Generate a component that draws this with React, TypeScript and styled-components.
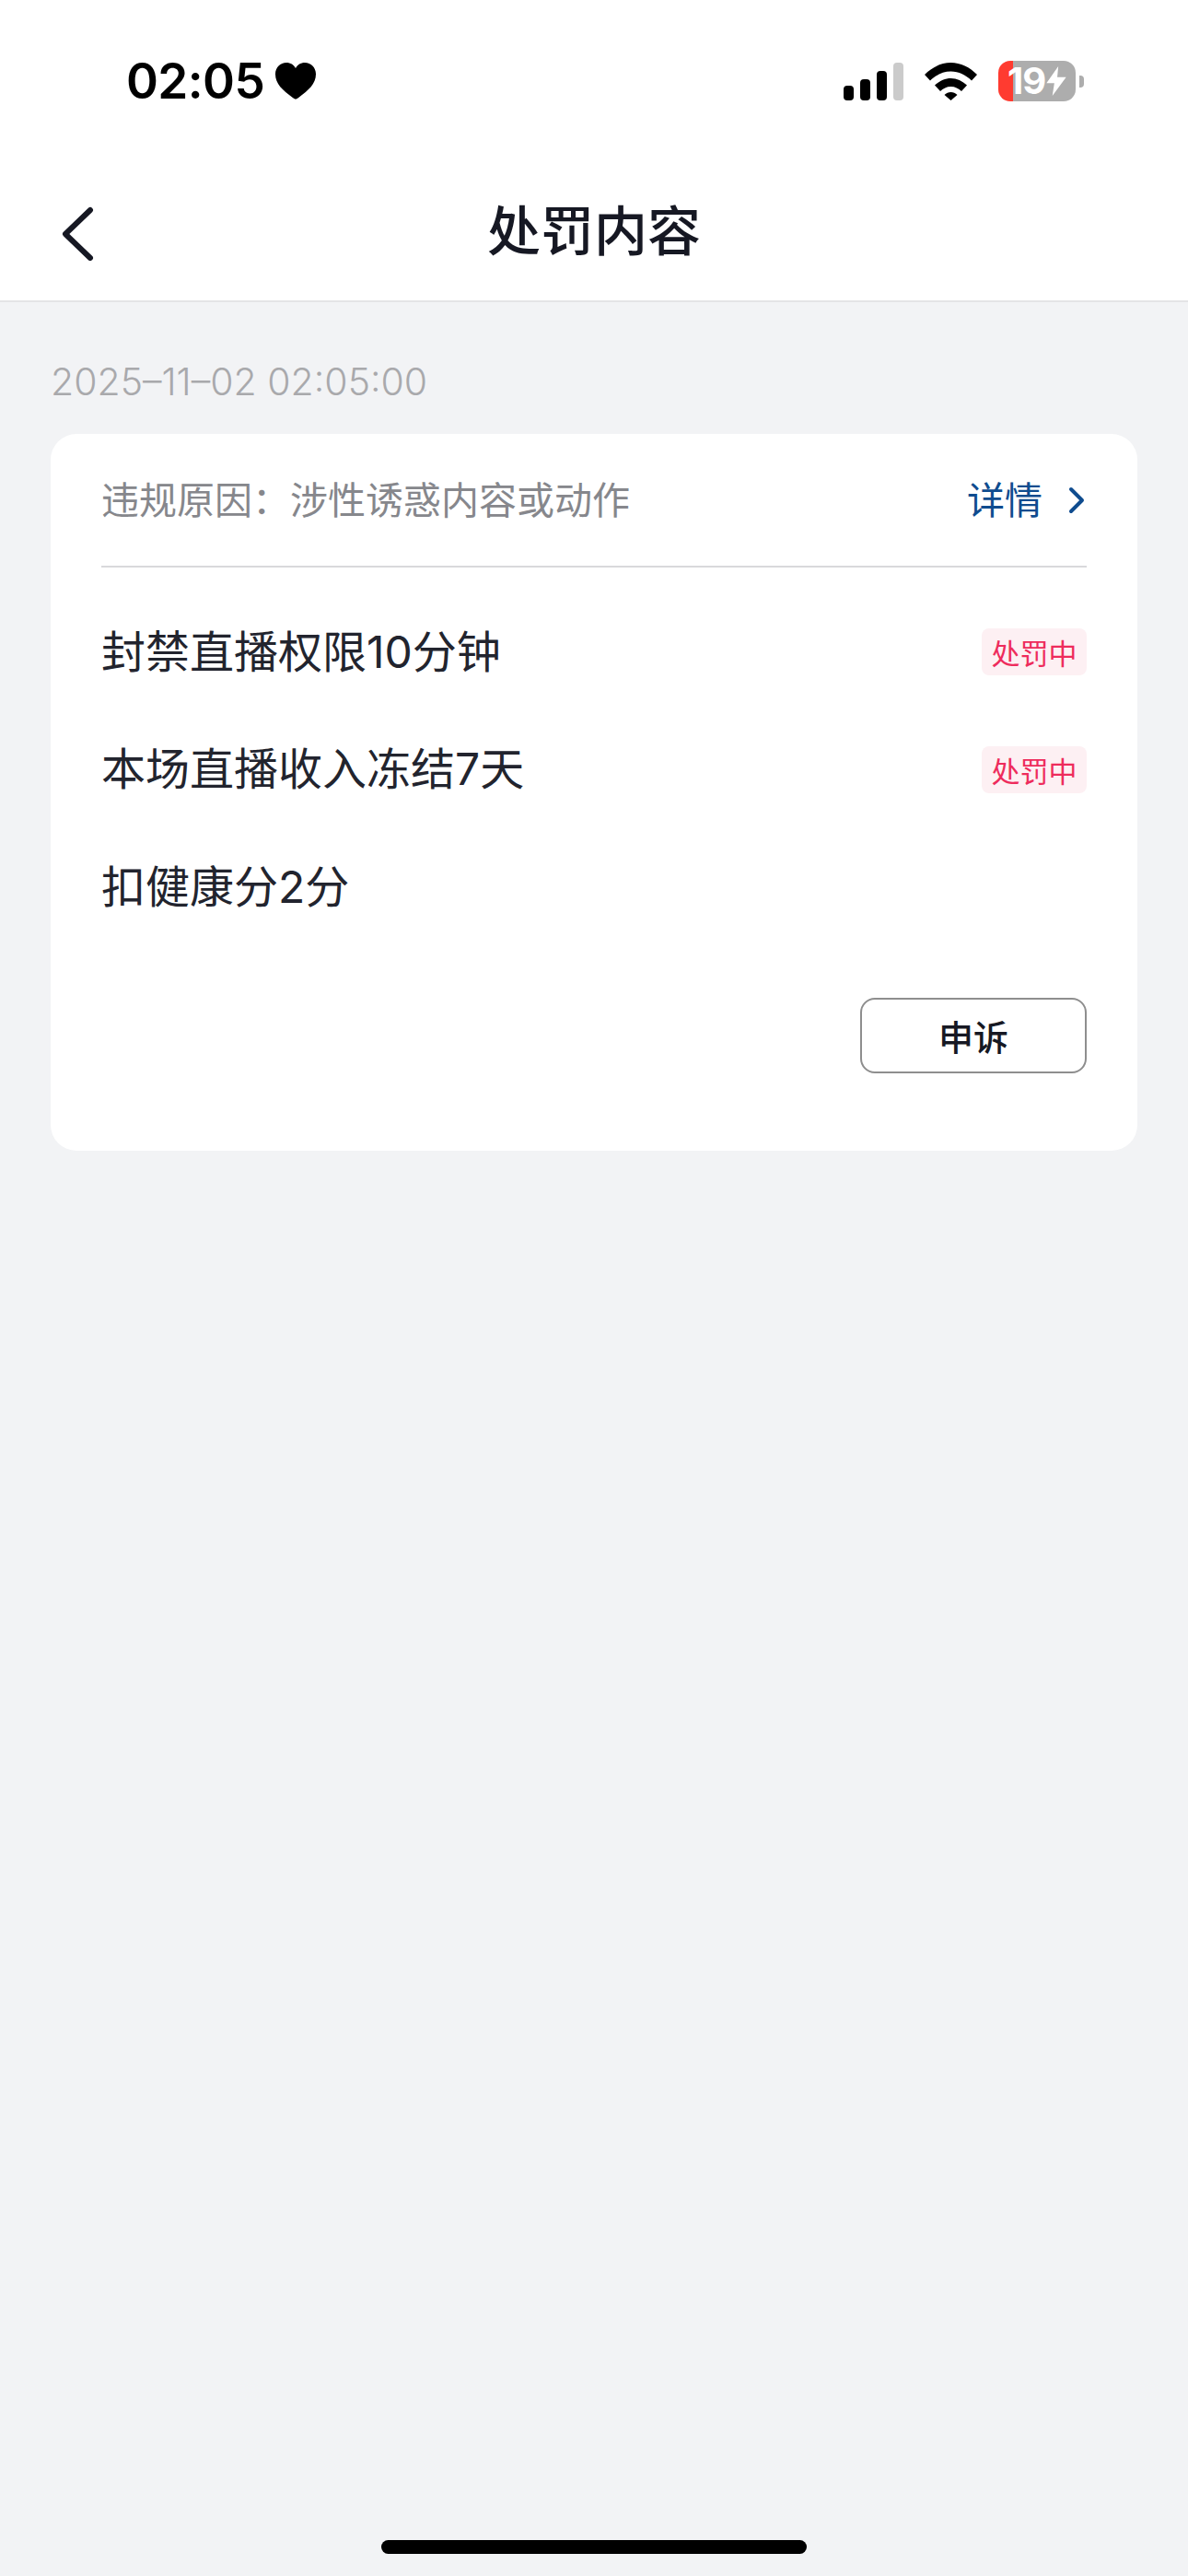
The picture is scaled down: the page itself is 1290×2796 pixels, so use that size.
import React from 'react';
import styled, { createGlobalStyle } from 'styled-components';

const GlobalStyle = createGlobalStyle`
  html, body {
    margin: 0;
    padding: 0;
    background: #f2f3f5;
    font-family: Inter, "Noto Sans CJK SC", sans-serif;
  }
`;

const Page = styled.div`
  width: 1290px;
  height: 2796px;
  display: flex;
  flex-direction: column;
  overflow: hidden;
  background: #f2f3f5;
`;

const Header = styled.header`
  background: #fff;
  border-bottom: 2px solid #e4e4e6;
`;

const StatusBar = styled.div`
  height: 176px;
  display: flex;
  align-items: center;
  justify-content: space-between;
  padding: 0 113px 0 137px;
`;

const TimeGroup = styled.div`
  display: flex;
  align-items: center;
  gap: 12px;
`;

const Time = styled.span`
  font-size: 53px;
  font-weight: 600;
  line-height: 60px;
  letter-spacing: -0.6px;
  color: #000;
`;

const StatusIcons = styled.div`
  display: flex;
  align-items: center;
  gap: 23px;
`;

const Signal = styled.div`
  display: flex;
  align-items: flex-end;
  gap: 7px;
  height: 41px;
`;

const SignalBar = styled.span<{ $h: number; $off?: boolean }>`
  width: 11px;
  height: ${({ $h }) => $h}px;
  border-radius: 4px;
  background: ${({ $off }) => ($off ? '#cbcbcb' : '#000')};
`;

const BatteryWrap = styled.div`
  display: flex;
  align-items: center;
  gap: 4px;
`;

const BatteryBody = styled.div`
  width: 84px;
  height: 44px;
  border-radius: 13px;
  display: flex;
  align-items: center;
  padding-left: 10px;
  box-sizing: border-box;
  background: linear-gradient(90deg, #ff3b30 16px, #adadad 16px);
`;

const BatteryText = styled.span`
  font-size: 40px;
  font-weight: 700;
  line-height: 44px;
  letter-spacing: -1px;
  color: #fff;
`;

const BatteryCap = styled.span`
  width: 5px;
  height: 13px;
  border-radius: 0 4px 4px 0;
  background: #adadad;
`;

const Nav = styled.nav`
  height: 150px;
  display: grid;
  grid-template-columns: 1fr auto 1fr;
  align-items: center;
  padding-left: 66px;
  padding-right: 66px;
`;

const Title = styled.h1`
  margin: 0;
  font-size: 58px;
  font-weight: 500;
  line-height: 70px;
  color: #161823;
`;

const Main = styled.main`
  flex: 1;
  padding: 56px 55px 0;
`;

const DateText = styled.div`
  font-size: 41px;
  font-weight: 300;
  line-height: 60px;
  color: #a9a9ac;
  margin-bottom: 27px;
`;

const Card = styled.section`
  height: 778px;
  box-sizing: border-box;
  background: #fff;
  border-radius: 28px;
  padding: 0 55px;
`;

const CardHead = styled.div`
  height: 145px;
  display: flex;
  align-items: center;
  justify-content: space-between;
  border-bottom: 2px solid #d9d9db;
  box-sizing: border-box;
`;

const Reason = styled.span`
  font-size: 41px;
  line-height: 60px;
  color: #86878c;
`;

const DetailLink = styled.a`
  display: flex;
  align-items: center;
  gap: 28px;
  font-size: 41px;
  line-height: 60px;
  color: #0f4c8f;
`;

const PunishList = styled.div`
  padding-top: 28px;
  margin-bottom: 56px;
`;

const PunishRow = styled.div`
  height: 127.5px;
  display: flex;
  align-items: center;
  justify-content: space-between;
`;

const PunishText = styled.span`
  font-size: 48px;
  line-height: 60px;
  color: #22242e;
`;

const Badge = styled.span`
  width: 114px;
  height: 51px;
  border-radius: 8px;
  display: flex;
  align-items: center;
  justify-content: center;
  font-size: 31px;
  color: #ee2c5c;
  background: #fdf0f3;
`;

const Actions = styled.div`
  display: flex;
  justify-content: flex-end;
`;

const AppealButton = styled.button`
  width: 246px;
  height: 82px;
  box-sizing: border-box;
  border: 2px solid #8e8e8e;
  border-radius: 16px;
  background: #fff;
  padding: 0;
  font-family: inherit;
  font-size: 38px;
  font-weight: 500;
  color: #161823;
`;

const HomeArea = styled.div`
  display: flex;
  justify-content: center;
  padding-bottom: 24px;
`;

const HomeBar = styled.div`
  width: 462px;
  height: 15px;
  border-radius: 8px;
  background: #000;
`;

type Punishment = {
  text: string;
  active: boolean;
};

const punishments: Punishment[] = [
  { text: '封禁直播权限10分钟', active: true },
  { text: '本场直播收入冻结7天', active: true },
  { text: '扣健康分2分', active: false },
];

function App() {
  return (
    <>
      <GlobalStyle />
      <Page>
        <Header>
          <StatusBar>
            <TimeGroup>
              <Time>02:05</Time>
              <svg width="44" height="40" viewBox="0 0 44 40">
                <path d="M22 39.5C21 39.5 20 38.8 18.5 37.7C8 30 0 23 0 12.5C0 5 5.5 0 12 0C16.5 0 20 2.3 22 6C24 2.3 27.5 0 32 0C38.5 0 44 5 44 12.5C44 23 36 30 25.5 37.7C24 38.8 23 39.5 22 39.5Z" fill="#000" />
              </svg>
            </TimeGroup>
            <StatusIcons>
              <Signal>
                <SignalBar $h={16} />
                <SignalBar $h={23} />
                <SignalBar $h={32} />
                <SignalBar $h={41} $off />
              </Signal>
              <svg width="57" height="41" viewBox="0 0 57 41">
                <path d="M0 13C8 5 18 0 28.5 0C39 0 49 5 57 13L51 19.5C45 13.5 37 9.5 28.5 9.5C20 9.5 12 13.5 6 19.5Z" fill="#000" />
                <path d="M11 24.5C16 20 22 17 28.5 17C35 17 41 20 46 24.5L40 31C37 28 33 26 28.5 26C24 26 20 28 17 31Z" fill="#000" />
                <path d="M21.5 35C23.5 33 26 32 28.5 32C31 32 33.5 33 35.5 35L28.5 41Z" fill="#000" />
              </svg>
              <BatteryWrap>
                <BatteryBody>
                  <BatteryText>19</BatteryText>
                  <svg width="24" height="32" viewBox="0 0 22 30">
                    <path d="M13 0L1 17H9L7 30L21 11H12Z" fill="#fff" />
                  </svg>
                </BatteryBody>
                <BatteryCap />
              </BatteryWrap>
            </StatusIcons>
          </StatusBar>
          <Nav>
            <svg width="36" height="64" viewBox="0 0 36 64">
              <polyline points="32,9 5,35 32,61" fill="none" stroke="#161823" strokeWidth="6" strokeLinecap="round" strokeLinejoin="round" />
            </svg>
            <Title>处罚内容</Title>
            <span />
          </Nav>
        </Header>
        <Main>
          <DateText>2025–11–02 02:05:00</DateText>
          <Card>
            <CardHead>
              <Reason>违规原因：涉性诱惑内容或动作</Reason>
              <DetailLink>
                详情
                <svg width="20" height="30" viewBox="0 0 20 30">
                  <polyline points="3,3 15,15 3,27" fill="none" stroke="#0f4c8f" strokeWidth="4" strokeLinecap="round" strokeLinejoin="round" />
                </svg>
              </DetailLink>
            </CardHead>
            <PunishList>
              {punishments.map((item) => (
                <PunishRow key={item.text}>
                  <PunishText>{item.text}</PunishText>
                  {item.active && <Badge>处罚中</Badge>}
                </PunishRow>
              ))}
            </PunishList>
            <Actions>
              <AppealButton>申诉</AppealButton>
            </Actions>
          </Card>
        </Main>
        <HomeArea>
          <HomeBar />
        </HomeArea>
      </Page>
    </>
  );
}

export default App;
